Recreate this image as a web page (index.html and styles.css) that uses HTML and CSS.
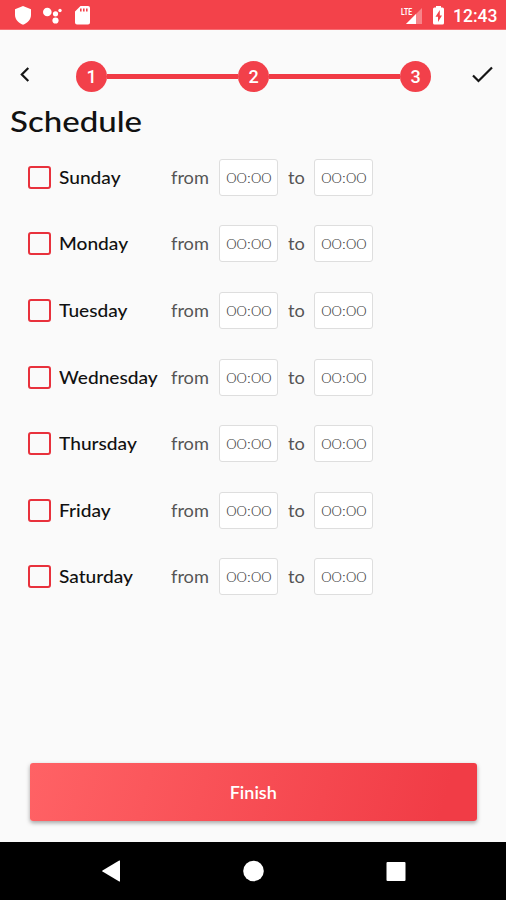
FILE: index.html
```html
<!DOCTYPE html>
<html lang="en">
<head>
<meta charset="utf-8">
<title>Schedule</title>
<link rel="stylesheet" href="styles.css">
</head>
<body>
<div class="status">
  <svg class="status-left" width="100" height="30" viewBox="0 0 100 30" fill="#fff">
    <path d="M23 6l8 3.2v5.6c0 4.6-3.2 8.300-8 10-4.800-1.700-8-5.400-8-10V9.200z"/>
    <circle cx="47.300" cy="12" r="4.300"/><circle cx="55.500" cy="13.800" r="2.600"/><circle cx="60" cy="10.500" r="1.700"/><circle cx="55.500" cy="20.500" r="3.100"/>
    <path fill-rule="evenodd" d="M80.500 6H88q2 0 2 2v14.500q0 2-2 2H77q-2 0-2-2V11.500zM80 8.500v3h1.600v-3zM83 8.500v3h1.600v-3zM86 8.500v3h1.600v-3z"/>
  </svg>
  <div class="status-right">
    <svg width="50" height="30" viewBox="0 0 50 30" fill="#fff">
      <path d="M22 8v16H6z" opacity=".35"/><path d="M16 14v10H6z"/>
      <text class="lte" x="1" y="14.500" textLength="11" lengthAdjust="spacingAndGlyphs">LTE</text>
      <path fill-rule="evenodd" d="M36 7.500V6h5v1.500h1.500q1.500 0 1.500 1.500v14q0 1.500-1.500 1.500h-8q-1.500 0-1.500-1.500V9q0-1.500 1.500-1.500zM39.800 10l-4.300 6.700h2.500V22l4-6.500h-2.200z"/>
    </svg>
    <span class="clock">12:43</span>
  </div>
</div>
<header class="steps">
  <svg class="back" width="12" height="18" viewBox="0 0 12 18"><path d="M9.300 2L2.800 8.500l6.500 6.500"/></svg>
  <div class="stepper">
    <span class="step">1</span><i class="line"></i><span class="step">2</span><i class="line"></i><span class="step">3</span>
  </div>
  <svg class="check" width="24" height="20" viewBox="0 0 24 20"><path d="M2 10.500l5.500 5.500L21 2.500"/></svg>
</header>
<h1><span>Schedule</span></h1>
<main>
  <div class="row"><i class="box"></i><span class="day"><span>Sunday</span></span><span class="from"><span>from</span></span><span class="time"><b>00:00</b></span><span class="to"><span>to</span></span><span class="time"><b>00:00</b></span></div>
  <div class="row"><i class="box"></i><span class="day"><span>Monday</span></span><span class="from"><span>from</span></span><span class="time"><b>00:00</b></span><span class="to"><span>to</span></span><span class="time"><b>00:00</b></span></div>
  <div class="row"><i class="box"></i><span class="day"><span>Tuesday</span></span><span class="from"><span>from</span></span><span class="time"><b>00:00</b></span><span class="to"><span>to</span></span><span class="time"><b>00:00</b></span></div>
  <div class="row"><i class="box"></i><span class="day"><span>Wednesday</span></span><span class="from"><span>from</span></span><span class="time"><b>00:00</b></span><span class="to"><span>to</span></span><span class="time"><b>00:00</b></span></div>
  <div class="row"><i class="box"></i><span class="day"><span>Thursday</span></span><span class="from"><span>from</span></span><span class="time"><b>00:00</b></span><span class="to"><span>to</span></span><span class="time"><b>00:00</b></span></div>
  <div class="row"><i class="box"></i><span class="day"><span>Friday</span></span><span class="from"><span>from</span></span><span class="time"><b>00:00</b></span><span class="to"><span>to</span></span><span class="time"><b>00:00</b></span></div>
  <div class="row"><i class="box"></i><span class="day"><span>Saturday</span></span><span class="from"><span>from</span></span><span class="time"><b>00:00</b></span><span class="to"><span>to</span></span><span class="time"><b>00:00</b></span></div>
</main>
<button class="finish"><span>Finish</span></button>
<nav>
  <svg width="506" height="58" viewBox="0 0 506 58" fill="#fff"><path d="M120 19v20q0 .8-.8.400L102.500 29.500q-.8-.5 0-1l16.700-9.900q.8-.4.8.4z"/><circle cx="253.500" cy="29" r="10.300"/><rect x="386.500" y="20" width="19" height="19" rx="1"/></svg>
</nav>
</body>
</html>
```
FILE: styles.css
```css
* { box-sizing: border-box; }
body {
  margin: 0;
  width: 506px;
  height: 900px;
  display: flex;
  flex-direction: column;
  overflow: hidden;
  background: #fafafa;
  font-family: Lato, sans-serif;
  color: #111;
}
svg { display: block; flex: none; }
.status {
  height: 30px;
  flex: none;
  display: flex;
  justify-content: space-between;
  background: #f3424a;
  border-bottom: 1px solid #f76c72;
}
.status-right { display: flex; padding-right: 9px; }
.lte { font: 700 9.500px Roboto, sans-serif; }
.clock {
  width: 44px;
  margin-left: 3px;
  font: 500 17.500px/32px Roboto, sans-serif;
  color: #fff;
  white-space: nowrap;
}
.steps {
  height: 62px;
  flex: none;
  display: flex;
  align-items: flex-start;
  padding: 31px 11px 0 19px;
}
.back, .check { fill: none; stroke: #151515; stroke-width: 2.200; }
.back { margin-top: 5px; }
.check { margin: 4px 0 0 auto; }
.stepper { display: flex; align-items: center; margin-left: 45px; }
.step {
  width: 31px;
  height: 31px;
  border-radius: 50%;
  background: #f2404a;
  color: #fff;
  font: 500 18px/31px Roboto, sans-serif;
  text-align: center;
}
.line { width: 131px; height: 5px; background: #f13b45; }
h1 {
  margin: 0;
  height: 52px;
  flex: none;
  padding-left: 10px;
  font-size: 28px;
  line-height: 59px;
  font-weight: 500;
}
h1 span, .day span, .from span, .to span, .finish span {
  display: inline-block;
  transform-origin: left center;
}
h1 span { transform: scaleX(1.18); }
main { flex: none; display: flex; flex-direction: column; height: 466px; }
.row { flex: 1; display: flex; align-items: center; padding-left: 28px; }
.box {
  width: 23px;
  height: 23px;
  border: 2px solid #e8313c;
  border-radius: 3px;
}
.day { width: 112px; margin-left: 8px; font-size: 17px; font-weight: 500; }
.day span { transform: scaleX(1.125); }
.from { width: 48px; }
.to { width: 36px; padding-left: 10px; }
.from, .to { font-size: 17px; color: #555; }
.from span, .to span { transform: scaleX(1.07); }
.time {
  width: 59px;
  height: 37px;
  display: flex;
  align-items: center;
  justify-content: center;
  background: #fff;
  border: 1px solid #dedede;
  border-radius: 3px;
}
.time b { font-size: 14px; font-weight: 300; color: #444; transform: scaleX(1.27); }
.finish {
  width: 447px;
  height: 58px;
  flex: none;
  margin: 153px 0 21px 30px;
  padding: 0;
  border: 0;
  border-radius: 3px;
  background: linear-gradient(105deg, #ff6265, #f13c46 92%);
  box-shadow: 0 2px 4px rgba(0, 0, 0, .35);
  color: #fff;
  font: 600 17px Lato, sans-serif;
}
.finish span { transform: scaleX(1.06); transform-origin: center; }
nav { height: 58px; flex: none; background: #000; }
```
